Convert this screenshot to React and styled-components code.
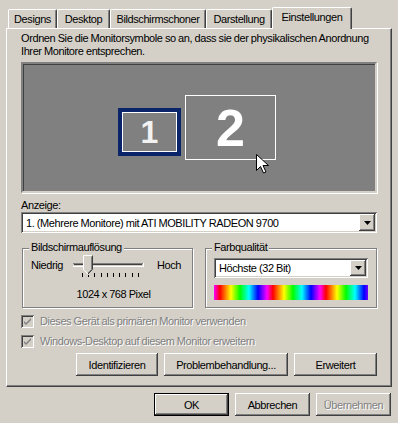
import React from "react";
import styled, { createGlobalStyle } from "styled-components";

const GlobalStyle = createGlobalStyle`
  html, body {
    margin: 0;
    padding: 0;
    background: #d4d0c8;
  }
  body {
    font-family: "Liberation Sans", Arial, sans-serif;
    font-size: 11px;
    letter-spacing: -0.4px;
    word-spacing: -0.3px;
    color: #000;
  }
`;

// classic 3d bevels
const raised = `
  box-shadow: inset -1px -1px #404040, inset 1px 1px #ffffff,
    inset -2px -2px #808080, inset 2px 2px #d4d0c8;
`;
const sunken = `
  box-shadow: inset 1px 1px #808080, inset -1px -1px #ffffff,
    inset 2px 2px #404040, inset -2px -2px #d4d0c8;
`;

const Window = styled.div`
  width: 398px;
  height: 423px;
  box-sizing: border-box;
  padding: 7px 6px 0;
  background: #d4d0c8;
`;

const TabStrip = styled.div`
  display: flex;
  align-items: flex-end;
  height: 21px;
  padding-left: 2px;
`;

const Tab = styled.div`
  position: relative;
  z-index: ${(p) => (p.$active ? 2 : 0)};
  width: ${(p) => p.$w}px;
  height: ${(p) => (p.$active ? 22 : 19)}px;
  margin-bottom: ${(p) => (p.$active ? -1 : 0)}px;
  box-sizing: border-box;
  padding-top: 3px;
  line-height: 13px;
  text-align: center;
  background: #d4d0c8;
  border-left: 1px solid #ffffff;
  border-top: 1px solid #ffffff;
  border-right: 1px solid #404040;
  border-radius: 2px 2px 0 0;
  box-shadow: inset -1px 0 #808080;
`;

const Panel = styled.div`
  position: relative;
  z-index: 1;
  height: 359px;
  box-sizing: border-box;
  border-left: 1px solid #ffffff;
  border-top: 1px solid #ffffff;
  border-right: 1px solid #404040;
  border-bottom: 1px solid #404040;
  box-shadow: inset -1px -1px #808080;
  padding: 3px 14px 0 14px;
  display: flex;
  flex-direction: column;
`;

const Intro = styled.p`
  margin: 0;
  line-height: 13px;
  white-space: nowrap;
`;

const Canvas = styled.div`
  position: relative;
  margin-top: 4px;
  height: 131px;
  box-sizing: border-box;
  background: #808080;
  border: 2px solid;
  border-color: #808080 #d4d0c8 #d4d0c8 #808080;
  box-shadow: inset 1px 1px #404040, 1px 1px #ffffff;
`;

const Monitor = styled.div`
  position: absolute;
  left: ${(p) => p.$x}px;
  top: ${(p) => p.$y}px;
  width: ${(p) => p.$w}px;
  height: ${(p) => p.$h}px;
  box-sizing: border-box;
  display: flex;
  align-items: center;
  justify-content: center;
  font-weight: bold;
  font-size: ${(p) => p.$size}px;
  letter-spacing: 0;
  line-height: 1;
  color: ${(p) => (p.$selected ? "#f2f2f2" : "#ffffff")};
  border: ${(p) => (p.$selected ? "4px solid #0a246a" : "1px solid #ffffff")};
  box-shadow: ${(p) => (p.$selected ? "inset 0 0 0 1px #ffffff" : "none")};
`;

const Cursor = styled.svg`
  position: absolute;
  left: 233px;
  top: 90px;
`;

const FieldLabel = styled.div`
  margin-top: 6px;
  line-height: 13px;
`;

const Combo = styled.div`
  display: flex;
  align-items: center;
  width: ${(p) => (p.$w ? `${p.$w}px` : "auto")};
  height: ${(p) => p.$h}px;
  box-sizing: border-box;
  padding: 2px 2px 2px 5px;
  background: #ffffff;
  ${sunken}
`;

const ComboText = styled.span`
  flex: 1;
  white-space: nowrap;
  overflow: hidden;
`;

const DropButton = styled.div`
  width: 16px;
  height: 100%;
  display: flex;
  align-items: center;
  justify-content: center;
  background: #d4d0c8;
  ${raised}
`;

const GroupRow = styled.div`
  display: flex;
  gap: 12px;
  margin-top: 15px;
  padding-left: 1px;
`;

const GroupBox = styled.div`
  position: relative;
  width: ${(p) => p.$w}px;
  height: 60px;
  box-sizing: border-box;
  border: 1px solid #808080;
  box-shadow: inset 1px 1px #ffffff, 1px 1px #ffffff;
  padding: ${(p) => p.$pad};
`;

const Legend = styled.span`
  position: absolute;
  top: -8px;
  left: 6px;
  padding: 0 2px;
  line-height: 13px;
  background: #d4d0c8;
`;

const SliderRow = styled.div`
  display: flex;
  align-items: flex-start;
`;

const SliderLabel = styled.span`
  width: ${(p) => p.$w}px;
  margin-top: 6px;
  margin-left: ${(p) => p.$ml || 0}px;
  line-height: 13px;
`;

const Caption = styled.div`
  margin-top: 7px;
  padding-left: 4px;
  text-align: center;
  line-height: 13px;
`;

const ColorBar = styled.div`
  margin-top: 7px;
  width: 154px;
  height: 15px;
  background: repeating-linear-gradient(
    to right,
    #ff00ff 0px,
    #ff0000 6px,
    #ffff00 17px,
    #00ff00 26px,
    #00ffff 35px,
    #0000ff 44px,
    #ff00ff 53px
  );
`;

const CheckRow = styled.div`
  display: flex;
  align-items: center;
  gap: 6px;
  height: 13px;
  margin-top: ${(p) => p.$mt}px;
`;

const CheckBox = styled.div`
  width: 13px;
  height: 13px;
  box-sizing: border-box;
  display: flex;
  align-items: center;
  justify-content: center;
  background: #d4d0c8;
  ${sunken}
`;

const DisabledText = styled.span`
  color: #808080;
  text-shadow: 1px 1px #ffffff;
  line-height: 13px;
`;

const ButtonRow = styled.div`
  display: flex;
  justify-content: flex-end;
  gap: 6px;
  margin-top: ${(p) => p.$mt}px;
  padding-right: ${(p) => p.$pr || 0}px;
`;

const Button = styled.div`
  width: ${(p) => p.$w}px;
  height: 23px;
  box-sizing: border-box;
  display: flex;
  align-items: center;
  justify-content: center;
  background: #d4d0c8;
  color: ${(p) => (p.$disabled ? "#808080" : "#000000")};
  text-shadow: ${(p) => (p.$disabled ? "1px 1px #ffffff" : "none")};
  border: ${(p) => (p.$default ? "1px solid #000000" : "none")};
  ${raised}
`;

const Arrow = () => (
  <svg width="7" height="4" viewBox="0 0 7 4">
    <path d="M0 0h7L3.5 4z" fill="#000" />
  </svg>
);

const Check = () => (
  <svg width="9" height="9" viewBox="0 0 9 9">
    <path d="M1 4l2 2 5-5v2l-5 5-2-2z" fill="#808080" />
  </svg>
);

const Slider = () => {
  const ticks = Array.from({ length: 10 }, (_, i) => 12 + i * 6.2);
  return (
    <svg width="80" height="28" viewBox="0 0 80 28">
      {/* channel */}
      <rect x="3" y="10" width="70" height="1" fill="#808080" />
      <rect x="4" y="11" width="68" height="1" fill="#404040" />
      <rect x="3" y="13" width="71" height="1" fill="#ffffff" />
      <rect x="73" y="10" width="1" height="4" fill="#ffffff" />
      {ticks.map((x, i) => (
        <rect
          key={i}
          x={Math.round(x)}
          y={i === 1 ? 22 : 20}
          width="1"
          height={i === 1 ? 2 : 4}
          fill="#000"
        />
      ))}
      {/* thumb */}
      <path d="M13.5 2.5h9v14l-4.5 4.5-4.5-4.5z" fill="#d4d0c8" />
      <path d="M13.5 16.5v-14h9" fill="none" stroke="#ffffff" />
      <path d="M22.5 2.5v14l-4.5 4.5" fill="none" stroke="#404040" />
      <path d="M21.5 3.5v13l-3.5 3.5" fill="none" stroke="#808080" />
      <path d="M13.5 16.5l4.5 4.5" fill="none" stroke="#ffffff" />
    </svg>
  );
};

export default function App() {
  return (
    <>
      <GlobalStyle />
      <Window>
        <TabStrip>
          <Tab $w={49}>Designs</Tab>
          <Tab $w={53}>Desktop</Tab>
          <Tab $w={96}>Bildschirmschoner</Tab>
          <Tab $w={66}>Darstellung</Tab>
          <Tab $w={80} $active>
            Einstellungen
          </Tab>
        </TabStrip>

        <Panel>
          <Intro>
            Ordnen Sie die Monitorsymbole so an, dass sie der physikalischen Anordnung
            <br />
            Ihrer Monitore entsprechen.
          </Intro>

          <Canvas>
            <Monitor $x={95} $y={44} $w={63} $h={48} $size={32} $selected>
              1
            </Monitor>
            <Monitor $x={162} $y={31} $w={91} $h={65} $size={52}>
              2
            </Monitor>
            <Cursor width="13" height="21" viewBox="0 0 13 21">
              <path
                d="M0.5 0.5v16l4-4 3 6.5 2.5-1-3-6.5h5.5z"
                fill="#ffffff"
                stroke="#000000"
              />
            </Cursor>
          </Canvas>

          <FieldLabel>Anzeige:</FieldLabel>
          <Combo $h={21}>
            <ComboText>1. (Mehrere Monitore) mit ATI MOBILITY RADEON 9700</ComboText>
            <DropButton>
              <Arrow />
            </DropButton>
          </Combo>

          <GroupRow>
            <GroupBox $w={172} $pad="4px 0 0 8px">
              <Legend>Bildschirmauflösung</Legend>
              <SliderRow>
                <SliderLabel $w={39}>Niedrig</SliderLabel>
                <Slider />
                <SliderLabel $w={30} $ml={7}>
                  Hoch
                </SliderLabel>
              </SliderRow>
              <Caption>1024 x 768 Pixel</Caption>
            </GroupBox>

            <GroupBox $w={173} $pad="9px 0 0 8px">
              <Legend>Farbqualität</Legend>
              <Combo $w={154} $h={20}>
                <ComboText>Höchste (32 Bit)</ComboText>
                <DropButton>
                  <Arrow />
                </DropButton>
              </Combo>
              <ColorBar />
            </GroupBox>
          </GroupRow>

          <CheckRow $mt={7}>
            <CheckBox>
              <Check />
            </CheckBox>
            <DisabledText>Dieses Gerät als primären Monitor verwenden</DisabledText>
          </CheckRow>
          <CheckRow $mt={7}>
            <CheckBox>
              <Check />
            </CheckBox>
            <DisabledText>Windows-Desktop auf diesem Monitor erweitern</DisabledText>
          </CheckRow>

          <ButtonRow $mt={5}>
            <Button $w={82}>Identifizieren</Button>
            <Button $w={124}>Problembehandlung...</Button>
            <Button $w={83}>Erweitert</Button>
          </ButtonRow>
        </Panel>

        <ButtonRow $mt={6} $pr={1}>
          <Button $w={75} $default>
            OK
          </Button>
          <Button $w={75}>Abbrechen</Button>
          <Button $w={75} $disabled>
            Übernehmen
          </Button>
        </ButtonRow>
      </Window>
    </>
  );
}
